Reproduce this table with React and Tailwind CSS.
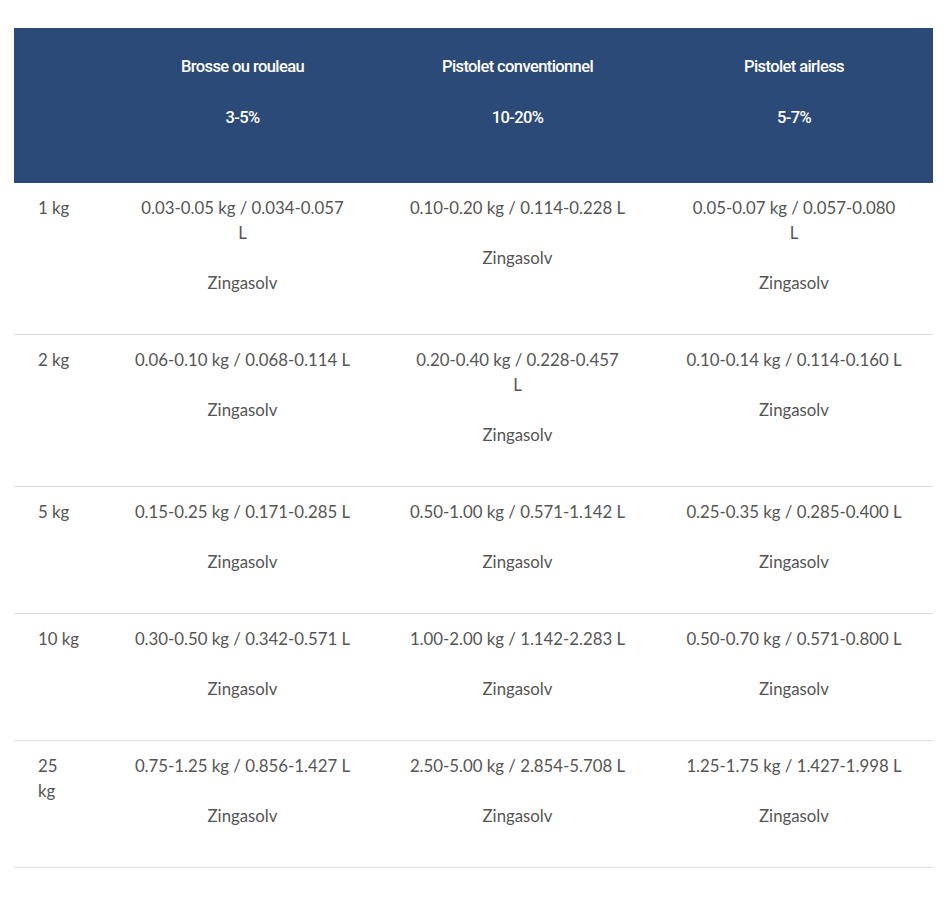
import React from 'react';

const methods = [
  { name: 'Brosse ou rouleau', loss: '3-5%' },
  { name: 'Pistolet conventionnel', loss: '10-20%' },
  { name: 'Pistolet airless', loss: '5-7%' },
];

// a line break where the cell wraps in the original
const rows = [
  { qty: ['1 kg'], vals: [['0.03-0.05 kg / 0.034-0.057', 'L'], ['0.10-0.20 kg / 0.114-0.228 L'], ['0.05-0.07 kg / 0.057-0.080', 'L']] },
  { qty: ['2 kg'], vals: [['0.06-0.10 kg / 0.068-0.114 L'], ['0.20-0.40 kg / 0.228-0.457', 'L'], ['0.10-0.14 kg / 0.114-0.160 L']] },
  { qty: ['5 kg'], vals: [['0.15-0.25 kg / 0.171-0.285 L'], ['0.50-1.00 kg / 0.571-1.142 L'], ['0.25-0.35 kg / 0.285-0.400 L']] },
  { qty: ['10 kg'], vals: [['0.30-0.50 kg / 0.342-0.571 L'], ['1.00-2.00 kg / 1.142-2.283 L'], ['0.50-0.70 kg / 0.571-0.800 L']] },
  { qty: ['25', 'kg'], vals: [['0.75-1.25 kg / 0.856-1.427 L'], ['2.50-5.00 kg / 2.854-5.708 L'], ['1.25-1.75 kg / 1.427-1.998 L']] },
];

const Lines = ({ parts }) => (
  <>
    {parts.map((t, i) => (
      <span key={i} className="block whitespace-nowrap">{t}</span>
    ))}
  </>
);

export default function App() {
  return (
    <div className="bg-white w-[947px] h-[908px] pt-[28px] pl-[14px]">
      <table className="w-[919px] table-fixed border-collapse">
        <colgroup>
          <col className="w-[91px]" />
          <col className="w-[275px]" />
          <col className="w-[275px]" />
          <col className="w-[278px]" />
        </colgroup>
        <thead>
          <tr className="bg-[#2b4a78] text-white font-['Roboto',sans-serif] text-[16.5px] leading-[26px] tracking-[-0.6px]">
            <th className="pt-[26px] pb-[52px] px-6"></th>
            {methods.map((m) => (
              <th key={m.name} className="pt-[26px] pb-[52px] px-6 text-center align-top font-medium">
                <p>{m.name}</p>
                <p className="mt-[25px]">{m.loss}</p>
              </th>
            ))}
          </tr>
        </thead>
        <tbody className="font-['Lato',sans-serif] text-[16.8px] leading-[25px] text-[#555555]">
          {rows.map((r) => (
            <tr key={r.qty.join(' ')} className="border-b border-[#dddddd]">
              <td className="pt-3 pb-[39px] px-6 align-top text-left">
                <Lines parts={r.qty} />
              </td>
              {r.vals.map((v, i) => (
                <td key={i} className="pt-3 pb-[39px] px-6 align-top text-center">
                  <p><Lines parts={v} /></p>
                  <p className="mt-[25px]">Zingasolv</p>
                </td>
              ))}
            </tr>
          ))}
        </tbody>
      </table>
    </div>
  );
}
